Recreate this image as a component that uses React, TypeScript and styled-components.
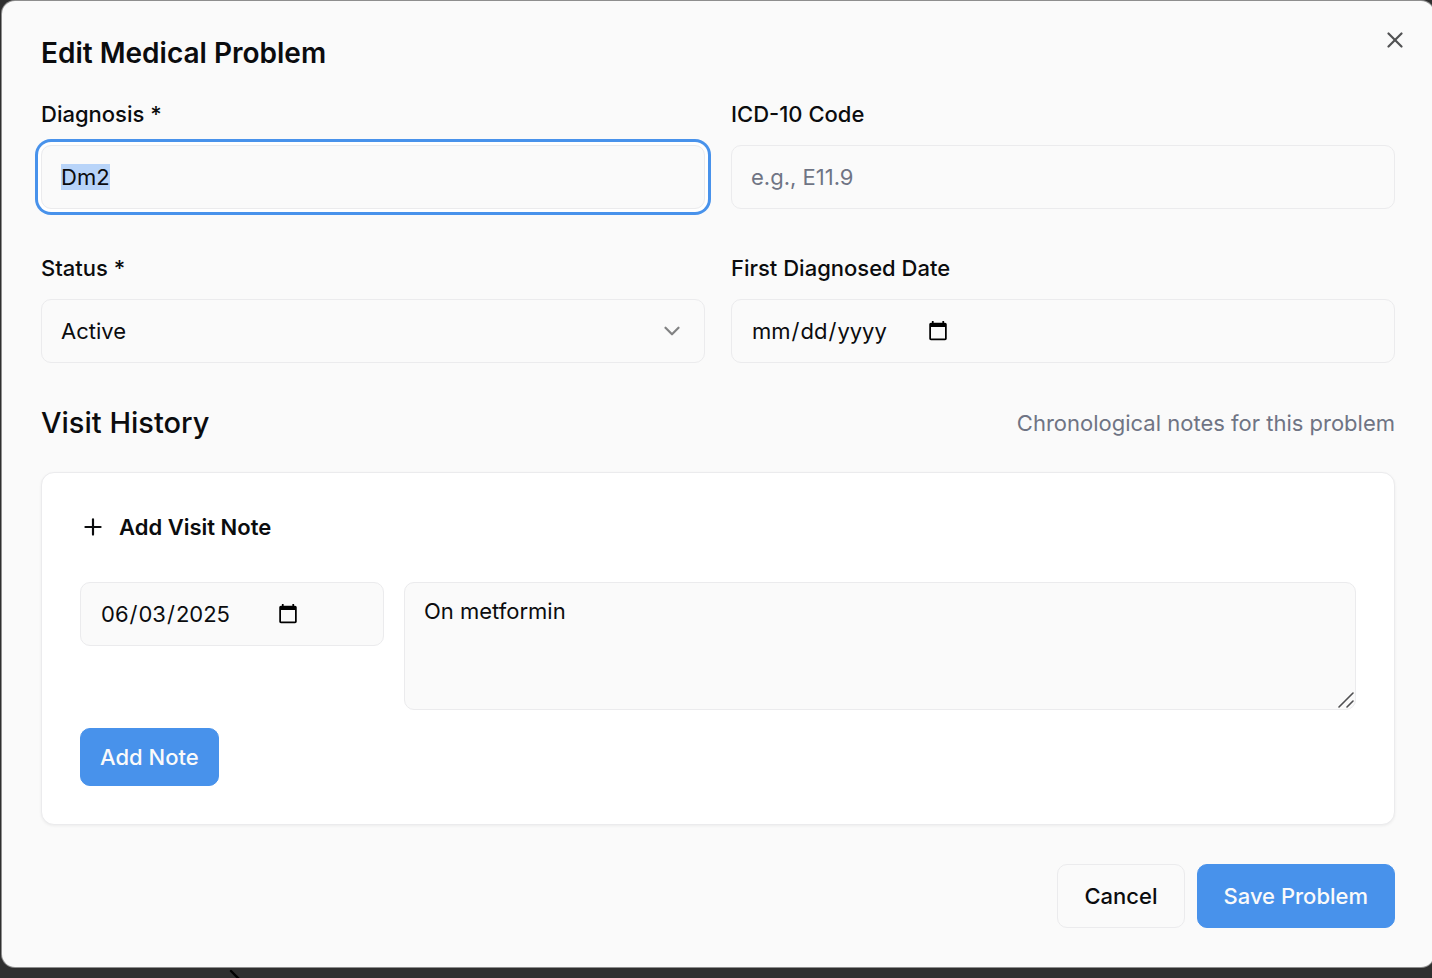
import React, { useEffect, useRef } from "react";
import styled, { createGlobalStyle, css } from "styled-components";
import { ChevronDown, Plus, X } from "lucide-react";

const GlobalStyle = createGlobalStyle`
  *, *::before, *::after { box-sizing: border-box; }
  body {
    margin: 0;
    overflow-x: hidden;
    background: #2f2f2f;
    color: #0b0c0e;
    font-family: Inter, "Liberation Sans", sans-serif;
    font-size: 22px;
    line-height: 32px;
  }
  button, input, select, textarea { font: inherit; color: inherit; }
`;

const Backdrop = styled.div`
  min-height: 100vh;
  padding-top: 1px;
  overflow: hidden;
  background: #2f2f2f;
`;

const Dialog = styled.main`
  position: relative;
  margin: 0 -2px 0 2px;
  padding: 38px 39px 39px;
  border-radius: 13px;
  background: #fafafa;
  box-shadow: 0 0 0 1px #8e8e8e;
`;

const CloseButton = styled.button`
  position: absolute;
  top: 26px;
  right: 26px;
  display: flex;
  padding: 0;
  border: 0;
  background: none;
  opacity: 0.7;
  cursor: pointer;
`;

const Title = styled.h1`
  margin: 0 0 30px;
  font-size: 28px;
  font-weight: 600;
  line-height: 29px;
`;

const FieldGrid = styled.div`
  display: grid;
  grid-template-columns: 1fr 1fr;
  gap: 43px 26px;
`;

const Field = styled.div`
  display: flex;
  flex-direction: column;
  gap: 15px;
  min-width: 0;
`;

const Label = styled.label`
  font-weight: 500;
`;

const control = css`
  width: 100%;
  min-width: 0;
  margin: 0;
  border: 1px solid #ebebed;
  border-radius: 10px;
  background: #fafafa;
  outline: none;

  &::placeholder { color: #6f7484; opacity: 1; }
  &::selection { background: rgba(183, 211, 249, 0.99); color: #0b0c0e; }
  &:focus { box-shadow: 0 0 0 3px #fff, 0 0 0 6px #4892eb; }
`;

const TextInput = styled.input`
  ${control}
  height: 64px;
  padding: 0 19px;
`;

const DateInput = styled(TextInput).attrs({ type: "date" })`
  display: flex;

  &::-webkit-calendar-picker-indicator {
    width: 22px;
    height: 22px;
    padding: 0;
    margin-left: 10px;
  }
`;

const SelectWrap = styled.div`
  position: relative;

  svg {
    position: absolute;
    top: 19px;
    right: 20px;
    opacity: 0.5;
    pointer-events: none;
  }
`;

const Select = styled.select`
  ${control}
  display: block;
  height: 64px;
  padding: 0 19px;
  appearance: none;
`;

const SectionHeader = styled.div`
  display: flex;
  align-items: center;
  justify-content: space-between;
  margin: 38px 0 27px;
`;

const SectionTitle = styled.h2`
  margin: 0;
  font-size: 29px;
  font-weight: 500;
  line-height: 44px;
`;

const Hint = styled.span`
  color: #6f7484;
`;

const Card = styled.section`
  padding: 38px;
  border: 1px solid #ebebed;
  border-radius: 13px;
  background: #fff;
  box-shadow: 0 1px 3px rgba(0, 0, 0, 0.06);
`;

const CardTitle = styled.h3`
  display: flex;
  align-items: center;
  gap: 13px;
  margin: 0 0 39px;
  font-size: 22px;
  font-weight: 600;
`;

const NoteGrid = styled.div`
  display: grid;
  grid-template-columns: repeat(4, 1fr);
  align-items: start;
  gap: 20px;
  margin-bottom: 18px;
`;

const NoteWrap = styled.div`
  position: relative;
  grid-column: span 3;

  svg {
    position: absolute;
    right: 2px;
    bottom: 2px;
    pointer-events: none;
  }
`;

const TextArea = styled.textarea`
  ${control}
  display: block;
  height: 128px;
  padding: 12px 19px;
  resize: vertical;

  &::-webkit-resizer { background: transparent; }
`;

const Footer = styled.div`
  display: flex;
  justify-content: flex-end;
  gap: 12px;
  margin-top: 39px;
`;

const Button = styled.button<{ $variant?: "primary" | "outline"; $small?: boolean }>`
  height: ${(p) => (p.$small ? 58 : 64)}px;
  padding: 0 ${(p) => (p.$small ? 19 : 26)}px;
  border: 1px solid ${(p) => (p.$variant === "outline" ? "#ebebed" : "#4892eb")};
  border-radius: 10px;
  background: ${(p) => (p.$variant === "outline" ? "#fafafa" : "#4892eb")};
  color: ${(p) => (p.$variant === "outline" ? "#0b0c0e" : "#fafafa")};
  font-weight: 500;
  cursor: pointer;
`;

const PageBehind = styled.div`
  height: 11px;
  padding-left: 226px;
  overflow: hidden;

  svg { display: block; }
`;

export default function App() {
  const diagnosis = useRef<HTMLInputElement>(null);

  useEffect(() => {
    diagnosis.current?.focus();
    diagnosis.current?.select();
  }, []);

  return (
    <>
      <GlobalStyle />
      <Backdrop>
        <Dialog role="dialog" aria-labelledby="dialog-title">
          <Title id="dialog-title">Edit Medical Problem</Title>
          <FieldGrid>
            <Field>
              <Label htmlFor="diagnosis">Diagnosis *</Label>
              <TextInput id="diagnosis" ref={diagnosis} defaultValue="Dm2" />
            </Field>
            <Field>
              <Label htmlFor="icd">ICD-10 Code</Label>
              <TextInput id="icd" placeholder="e.g., E11.9" />
            </Field>
            <Field>
              <Label htmlFor="status">Status *</Label>
              <SelectWrap>
                <Select id="status" defaultValue="Active">
                  <option>Active</option>
                </Select>
                <ChevronDown size={26} />
              </SelectWrap>
            </Field>
            <Field>
              <Label htmlFor="diagnosed">First Diagnosed Date</Label>
              <DateInput id="diagnosed" />
            </Field>
          </FieldGrid>
          <SectionHeader>
            <SectionTitle>Visit History</SectionTitle>
            <Hint>Chronological notes for this problem</Hint>
          </SectionHeader>
          <Card>
            <CardTitle>
              <Plus size={26} />
              Add Visit Note
            </CardTitle>
            <NoteGrid>
              <DateInput aria-label="Visit date" defaultValue="2025-06-03" />
              <NoteWrap>
                <TextArea aria-label="Visit note" defaultValue="On metformin" />
                <svg width="16" height="16" viewBox="0 0 16 16" stroke="#505052" strokeWidth="1.6" strokeLinecap="round">
                  <path d="M1 15 15 1M9 15l6-6" />
                </svg>
              </NoteWrap>
            </NoteGrid>
            <Button type="button" $small>Add Note</Button>
          </Card>
          <Footer>
            <Button type="button" $variant="outline">Cancel</Button>
            <Button type="button">Save Problem</Button>
          </Footer>
          <CloseButton type="button" aria-label="Close">
            <X size={26} />
          </CloseButton>
        </Dialog>
        <PageBehind aria-hidden="true">
          <svg width="16" height="12" viewBox="0 0 16 12" stroke="#000" strokeWidth="2.4" strokeLinecap="round">
            <path d="M5 4l8 8" />
          </svg>
        </PageBehind>
      </Backdrop>
    </>
  );
}
